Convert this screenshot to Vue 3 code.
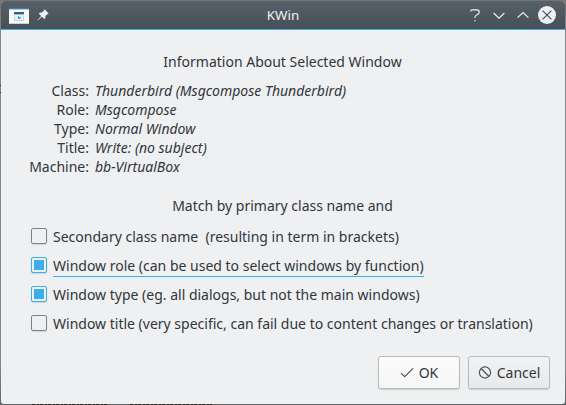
<script setup>
import { ref } from 'vue'

const details = [
  { label: 'Class:', value: 'Thunderbird (Msgcompose Thunderbird)' },
  { label: 'Role:', value: 'Msgcompose' },
  { label: 'Type:', value: 'Normal Window' },
  { label: 'Title:', value: 'Write: (no subject)' },
  { label: 'Machine:', value: 'bb-VirtualBox' },
]

const options = ref([
  { text: 'Secondary class name  (resulting in term in brackets)', checked: false },
  { text: 'Window role (can be used to select windows by function)', checked: true, focused: true },
  { text: 'Window type (eg. all dialogs, but not the main windows)', checked: true },
  { text: 'Window title (very specific, can fail due to content changes or translation)', checked: false },
])
</script>

<template>
  <div class="desktop">
    <div class="window">
      <header class="titlebar">
        <div class="side">
          <svg class="app-icon" width="20" height="16" viewBox="0 0 20 16" shape-rendering="crispEdges">
            <rect width="20" height="16" fill="#f7f8f8" />
            <rect width="20" height="1" fill="#3b7fa5" />
            <rect y="1" width="20" height="1" fill="#b5c9d3" />
            <rect y="15" width="20" height="1" fill="#cfd2d4" />
            <rect x="5" y="4" width="10" height="9" fill="#c9d6dd" />
            <rect x="5" y="4" width="10" height="2" fill="#475a68" />
            <rect x="6" y="6" width="8" height="1" fill="#8fc3de" />
            <rect x="6" y="7" width="8" height="5" fill="#e9f1f6" />
            <path d="M9 8h1v1h2v1h-1v1h-2z" fill="#3d9fd2" />
          </svg>
          <svg class="pin" width="12" height="12" viewBox="0 0 12 12">
            <path d="M7.6 0.3 11.7 4.4 10.6 5 8.4 7.3 8.2 9.6 7.3 10 4.9 7.7 0.7 11.5 0.4 11.2 4.2 7 1.9 4.7 2.5 3.8 4.7 3.6 7 1.4z" fill="#eff0f1" />
          </svg>
        </div>
        <div class="caption">KWin</div>
        <div class="side controls">
          <svg width="18" height="18" viewBox="0 0 18 18" class="stroke">
            <path d="M4.7 5.6V5.2Q4.7 3.9 6 3.9H11.1Q13.2 3.9 13.2 6.1 13.2 7.4 12 8.2L9.8 9.6Q9 10.2 9 11.3V12" />
            <rect x="8.2" y="13.8" width="1.6" height="1.7" fill="#aeb3b6" stroke="none" />
          </svg>
          <svg width="18" height="18" viewBox="0 0 18 18" class="stroke"><path d="M3.6 7 9 12.2 14.4 7" /></svg>
          <svg width="18" height="18" viewBox="0 0 18 18" class="stroke"><path d="M3.6 11.7 9 6.5 14.4 11.7" /></svg>
          <svg width="18" height="18" viewBox="0 0 18 18">
            <circle cx="9" cy="9" r="9" fill="#eff0f1" />
            <path d="M4.6 4.6 13.4 13.4M13.4 4.6 4.6 13.4" stroke="#4b545c" stroke-width="1.25" />
          </svg>
        </div>
      </header>

      <main class="content">
        <h1 class="heading">Information About Selected Window</h1>
        <dl class="details">
          <template v-for="d in details" :key="d.label">
            <dt>{{ d.label }}</dt>
            <dd>{{ d.value }}</dd>
          </template>
        </dl>
        <h2 class="heading match">Match by primary class name and</h2>
        <div class="options">
          <label v-for="o in options" :key="o.text" class="option" :class="{ checked: o.checked, focused: o.focused }">
            <input v-model="o.checked" type="checkbox" class="native" />
            <span class="box"></span>
            <span class="text">{{ o.text }}</span>
          </label>
        </div>
        <footer class="buttons">
          <button class="button ok">
            <svg width="14" height="14" viewBox="0 0 14 14"><path d="M1 7.1 4.7 10.7 13 2.3" fill="none" stroke="#4d5154" stroke-width="1.15" /></svg>
            <span>OK</span>
          </button>
          <button class="button cancel">
            <svg width="14" height="14" viewBox="0 0 14 14"><g fill="none" stroke="#4d5154" stroke-width="1.15"><circle cx="7" cy="6.5" r="5.6" /><path d="M3 2.5 11 10.5" /></g></svg>
            <span>Cancel</span>
          </button>
        </footer>
      </main>
    </div>
  </div>
</template>

<style>
body {
  margin: 0;
  overflow: hidden;
}
</style>

<style scoped>
.desktop {
  box-sizing: border-box;
  width: 566px;
  height: 405px;
  padding: 1px;
  background:
    repeating-linear-gradient(90deg, #222 0 3px, #626262 3px 5px, #222 5px 7px, #626262 7px 8px) 32px 404px / 76px 1px no-repeat,
    repeating-linear-gradient(90deg, #222 0 3px, #626262 3px 5px, #222 5px 7px, #626262 7px 8px) 130px 404px / 82px 1px no-repeat,
    linear-gradient(#333, #333) 0 85px / 1px 1px no-repeat,
    linear-gradient(#333, #333) 0 92px / 1px 1px no-repeat,
    linear-gradient(#77736e, #858688 8%, #858688 90%, #636465);
  font: 14px/19px "Noto Sans", sans-serif;
  color: #31363b;
}
.window {
  height: 403px;
  border-radius: 4px 4px 3px 3px;
  overflow: hidden;
  background: #eff0f1;
}
.titlebar {
  display: grid;
  grid-template-columns: 1fr auto 1fr;
  align-items: center;
  box-sizing: border-box;
  height: 29px;
  padding: 0 9px 0 8px;
  background: linear-gradient(#566068, #475057);
  border-bottom: 1px solid #3daee9;
  color: #eff0f1;
}
.side {
  display: flex;
  align-items: center;
}
.app-icon {
  margin-top: 2px;
}
.pin {
  margin-left: 8px;
}
.controls {
  justify-content: flex-end;
  gap: 6px;
}
.stroke {
  fill: none;
  stroke: #eff0f1;
  stroke-width: 1.15;
}
.caption {
  padding-left: 1px;
  font-size: 13.33px;
}
.content {
  padding: 22px 15px 0 27px;
}
.heading {
  margin: 0 15px 0 2px;
  font: inherit;
  text-align: center;
}
.details {
  display: grid;
  grid-template-columns: 61px 1fr;
  column-gap: 6px;
  margin: 10px 0 0;
}
.details dt {
  text-align: right;
  white-space: nowrap;
}
.details dd {
  margin: 0;
  font-style: italic;
}
.match {
  margin-top: 20px;
}
.options {
  display: flex;
  flex-direction: column;
  gap: 6px;
  margin: 10px 0 0 3px;
}
.option {
  display: flex;
  align-items: flex-start;
  gap: 6px;
  height: 23px;
}
.native {
  display: none;
}
.box {
  box-sizing: border-box;
  flex: none;
  width: 16px;
  height: 16px;
  margin-top: 3px;
  border: 1px solid #7f8183;
  border-radius: 2px;
  box-shadow: 0 1px 1px #d3d5d6;
}
.checked .box {
  padding: 2px;
  border-color: #3daee9;
  background: #3daee9 content-box;
}
.text {
  box-sizing: border-box;
  height: 23px;
  padding-top: 2px;
  white-space: pre;
  border-bottom: 1px solid transparent;
}
.focused .text {
  border-bottom-color: #3daee9;
}
.buttons {
  display: flex;
  justify-content: flex-end;
  gap: 8px;
  margin-top: 21px;
}
.button {
  display: flex;
  align-items: center;
  justify-content: center;
  gap: 5px;
  box-sizing: border-box;
  width: 82px;
  height: 33px;
  padding: 0;
  border: 1px solid #b9bbbc;
  border-radius: 3px;
  box-shadow: 0 1px 1px #c9cbcc;
  font: inherit;
  color: inherit;
}
.ok {
  background: linear-gradient(#fcfcfc, #f5f6f6);
}
.cancel {
  background: linear-gradient(#f1f2f3, #e8e9ea);
}
</style>
